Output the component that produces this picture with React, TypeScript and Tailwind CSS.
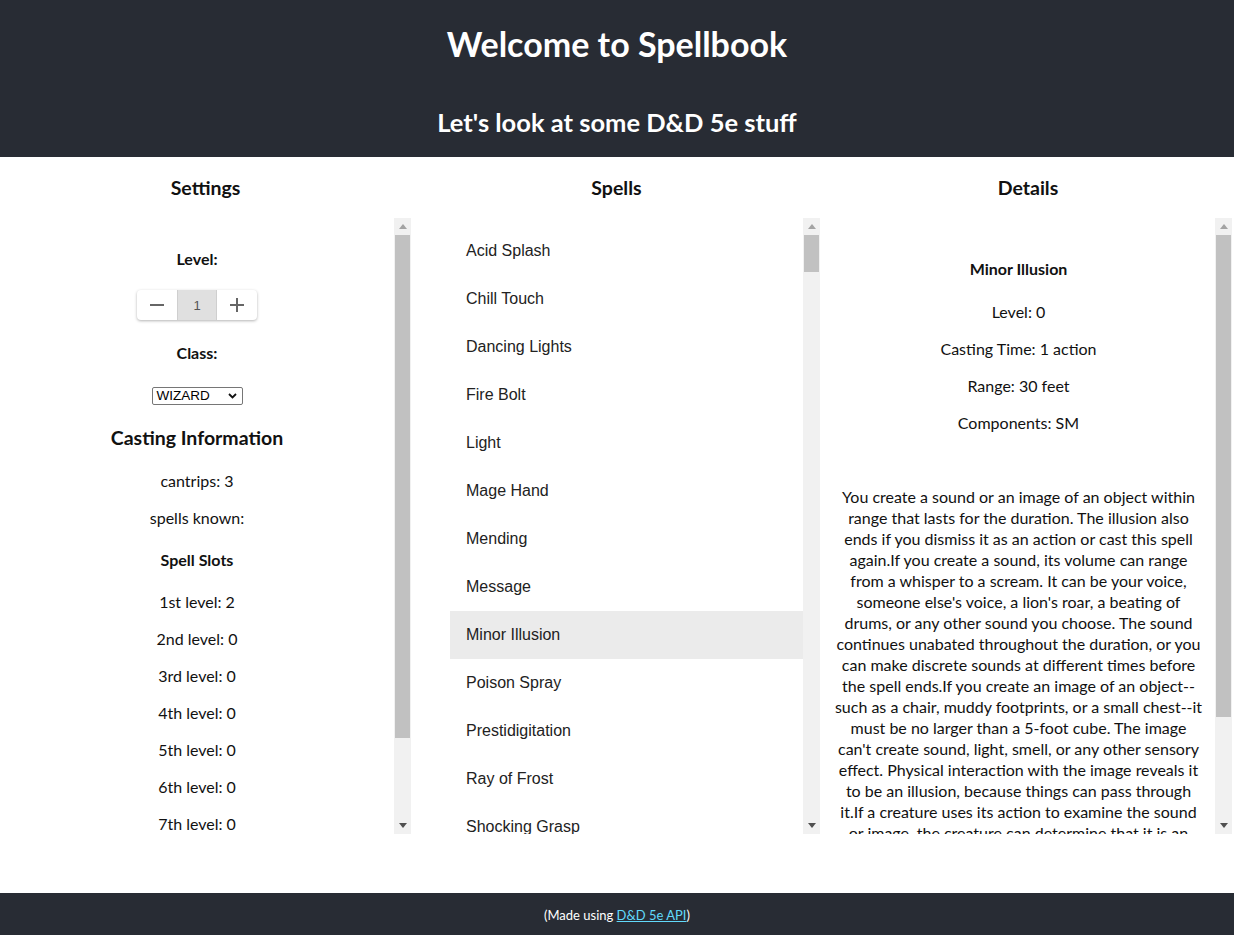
import { FC } from "react";

const spells = [
	"Acid Splash",
	"Chill Touch",
	"Dancing Lights",
	"Fire Bolt",
	"Light",
	"Mage Hand",
	"Mending",
	"Message",
	"Minor Illusion",
	"Poison Spray",
	"Prestidigitation",
	"Ray of Frost",
	"Shocking Grasp",
	"True Strike",
];

const slots = ["1st level: 2", "2nd level: 0", "3rd level: 0", "4th level: 0", "5th level: 0", "6th level: 0", "7th level: 0", "8th level: 0", "9th level: 0"];

const descLines = [
	"You create a sound or an image of an object within",
	"range that lasts for the duration. The illusion also",
	"ends if you dismiss it as an action or cast this spell",
	"again.If you create a sound, its volume can range",
	"from a whisper to a scream. It can be your voice,",
	"someone else's voice, a lion's roar, a beating of",
	"drums, or any other sound you choose. The sound",
	"continues unabated throughout the duration, or you",
	"can make discrete sounds at different times before",
	"the spell ends.If you create an image of an object--",
	"such as a chair, muddy footprints, or a small chest--it",
	"must be no larger than a 5-foot cube. The image",
	"can't create sound, light, smell, or any other sensory",
	"effect. Physical interaction with the image reveals it",
	"to be an illusion, because things can pass through",
	"it.If a creature uses its action to examine the sound",
	"or image, the creature can determine that it is an",
	"illusion with a successful Intelligence (Investigation)",
	"check against your spell save DC. If a creature",
	"discerns the illusion for what it is, the illusion",
	"becomes faint to the creature.",
];

const Scrollbar: FC<{ thumb: number }> = ({ thumb }) => (
	<div className="w-[17px] shrink-0 h-full bg-[#f1f1f1] flex flex-col">
		<div className="h-[17px] flex items-center justify-center">
			<svg width="8" height="5" viewBox="0 0 8 5">
				<path d="M0 5 L4 0 L8 5 Z" fill="#a3a3a3" />
			</svg>
		</div>
		<div className="flex-1 px-[1px]">
			<div className="w-full bg-[#c1c1c1]" style={{ height: thumb }} />
		</div>
		<div className="h-[17px] flex items-center justify-center">
			<svg width="8" height="5" viewBox="0 0 8 5">
				<path d="M0 0 L8 0 L4 5 Z" fill="#505050" />
			</svg>
		</div>
	</div>
);

const Heading: FC<{ title: string }> = ({ title }) => (
	<h3 className="mt-[18px] text-[19.5px] leading-[25px] font-bold text-center">{title}</h3>
);

const App: FC = () => {
	return (
		<div className="min-h-screen flex flex-col bg-white text-[#111] font-['Lato','Noto_Sans',sans-serif]">
			<header className="h-[157px] bg-[#282c34] text-white flex flex-col items-center">
				<h1 className="mt-[22px] text-[34px] leading-[43px] font-bold">Welcome to Spellbook</h1>
				<h2 className="mt-[41px] text-[25.5px] leading-[32px] font-bold">Let's look at some D&amp;D 5e stuff</h2>
			</header>

			<main className="h-[736px] grid grid-cols-[411px_411px_1fr]">
				{/* settings */}
				<section className="flex flex-col">
					<Heading title="Settings" />
					<div className="mt-[18px] h-[616px] w-[411px] flex overflow-hidden">
						<div className="flex-1 flex flex-col items-center pt-[30px] text-[16px] leading-[21px] [&>*]:shrink-0">
							<h4 className="font-bold">Level:</h4>
							<div className="mt-[21px] h-[30px] w-[120px] flex rounded-[4px] bg-white shadow-[0_1px_3px_rgba(0,0,0,0.3)] overflow-hidden">
								<button className="w-[40px] flex items-center justify-center">
									<svg width="24" height="24" viewBox="0 0 24 24">
										<path d="M19 13H5v-2h14v2z" fill="#666" />
									</svg>
								</button>
								<div className="w-[40px] flex items-center justify-center bg-[#e0e0e0] border-x border-[#cfcfcf] text-[13px] text-[#555] font-['Liberation_Sans',Arial,sans-serif]">
									1
								</div>
								<button className="w-[40px] flex items-center justify-center">
									<svg width="24" height="24" viewBox="0 0 24 24">
										<path d="M19 13h-6v6h-2v-6H5v-2h6V5h2v6h6v2z" fill="#666" />
									</svg>
								</button>
							</div>
							<h4 className="mt-[22px] font-bold">Class:</h4>
							<div className="mt-[24px] h-[18px] w-[91px] flex items-center justify-between pl-[4px] pr-[5px] border border-[#767676] rounded-[2px] text-[13.5px] leading-none text-black font-['Liberation_Sans',Arial,sans-serif]">
								<span>WIZARD</span>
								<svg width="9" height="6" viewBox="0 0 9 6">
									<path d="M1 1 L4.5 4.5 L8 1" stroke="#111" strokeWidth="1.8" fill="none" />
								</svg>
							</div>
							<h3 className="mt-[20px] text-[19.5px] leading-[25px] font-bold">Casting Information</h3>
							<p className="mt-[20px]">cantrips: 3</p>
							<p className="mt-[16px]">spells known:</p>
							<h4 className="mt-[21px] font-bold">Spell Slots</h4>
							{slots.map((s, i) => (
								<p key={s} className={i === 0 ? "mt-[21px]" : "mt-[16px]"}>
									{s}
								</p>
							))}
						</div>
						<Scrollbar thumb={503} />
					</div>
				</section>

				{/* spells */}
				<section className="flex flex-col">
					<Heading title="Spells" />
					<div className="mt-[18px] h-[616px] w-[409px] flex overflow-hidden">
						<ul className="flex-1 pl-[39px] pt-[9px] font-['Liberation_Sans',Arial,sans-serif] text-[16px] text-[#222]">
							{spells.map((s) => (
								<li
									key={s}
									className={`h-[48px] flex items-center pl-[16px] ${s === "Minor Illusion" ? "bg-[#ebebeb]" : ""}`}
								>
									{s}
								</li>
							))}
						</ul>
						<Scrollbar thumb={37} />
					</div>
				</section>

				{/* details */}
				<section className="flex flex-col">
					<Heading title="Details" />
					<div className="mt-[18px] h-[616px] w-[410px] flex overflow-hidden">
						<div className="flex-1 flex flex-col items-center pt-[40px] text-[16px] leading-[21px] text-center">
							<h4 className="font-bold">Minor Illusion</h4>
							<p className="mt-[22px]">Level: 0</p>
							<p className="mt-[16px]">Casting Time: 1 action</p>
							<p className="mt-[16px]">Range: 30 feet</p>
							<p className="mt-[16px]">Components: SM</p>
							<p className="mt-[53px] flex flex-col items-center">
								{descLines.map((l) => (
									<span key={l} className="whitespace-nowrap">
										{l}
									</span>
								))}
							</p>
						</div>
						<Scrollbar thumb={482} />
					</div>
				</section>
			</main>

			<footer className="h-[42px] bg-[#282c34] flex items-center justify-center pt-[3px] text-[13px] text-white">
				<span>
					(Made using{" "}
					<a href="#" className="text-[#61dafb] underline">
						D&amp;D 5e API
					</a>
					)
				</span>
			</footer>
		</div>
	);
};

export default App;
